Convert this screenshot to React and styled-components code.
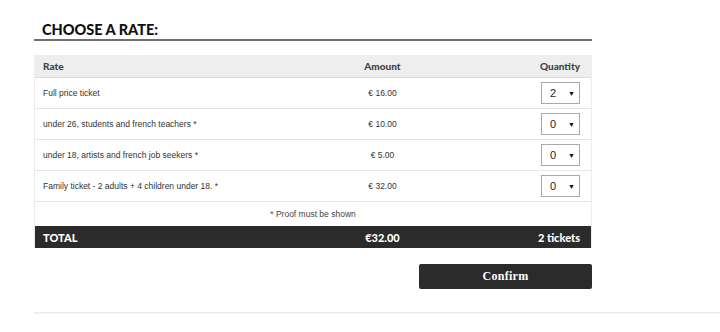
import React from 'react'
import styled, { createGlobalStyle } from 'styled-components'

const Global = createGlobalStyle`
  html, body { margin: 0; padding: 0; background: #fff; }
  body { font-family: "Liberation Sans", Arial, sans-serif; }
`

const rates = [
  { name: 'Full price ticket', amount: '€ 16.00', qty: 2 },
  { name: 'under 26, students and french teachers *', amount: '€ 10.00', qty: 0 },
  { name: 'under 18, artists and french job seekers *', amount: '€ 5.00', qty: 0 },
  { name: 'Family ticket - 2 adults + 4 children under 18. *', amount: '€ 32.00', qty: 0 },
]

const App = () => {
  return (
    <Page>
      <Global />
      <Section>
        <Title>CHOOSE A RATE:</Title>
        <Table>
          <HeadRow>
            <Cell>Rate</Cell>
            <Cell align="center">Amount</Cell>
            <Cell align="right">Quantity</Cell>
          </HeadRow>
          {rates.map((r) => (
            <Row key={r.name}>
              <Cell>{r.name}</Cell>
              <Cell align="center">{r.amount}</Cell>
              <Cell align="right">
                <Select>
                  <span>{r.qty}</span>
                  <Arrow>▼</Arrow>
                </Select>
              </Cell>
            </Row>
          ))}
          <Note>* Proof must be shown</Note>
          <TotalRow>
            <Cell>TOTAL</Cell>
            <Cell align="center">€32.00</Cell>
            <Cell align="right">2 tickets</Cell>
          </TotalRow>
        </Table>
        <Actions>
          <Confirm>Confirm</Confirm>
        </Actions>
      </Section>
      <Footer />
    </Page>
  )
}

const Page = styled.div`
  width: 720px;
  height: 332px;
  padding-top: 22px;
  box-sizing: border-box;
  overflow: hidden;
`

const Section = styled.div`
  width: 558px;
  margin-left: 34px;
`

const Title = styled.h2`
  margin: 0;
  padding: 0 0 2px 8px;
  font-family: "Lato", sans-serif;
  font-weight: 900;
  font-size: 14.5px;
  line-height: 15px;
  color: #111;
  border-bottom: 2px solid #6f6f6f;
`

const Table = styled.div`
  margin-top: 14px;
  border-left: 1px solid #ececec;
  border-right: 1px solid #ececec;
`

const Cell = styled.div`
  display: flex;
  align-items: center;
  justify-content: ${(p) =>
    p.align === 'center' ? 'center' : p.align === 'right' ? 'flex-end' : 'flex-start'};
  &:first-child { padding-left: 8px; }
  &:last-child { padding-right: 11px; }
`

const Grid = styled.div`
  display: grid;
  grid-template-columns: 50% 25% 25%;
  box-sizing: border-box;
`

const HeadRow = styled(Grid)`
  height: 23px;
  background: #eeeeee;
  border-bottom: 1px solid #dcdcdc;
  font-family: "Lato", sans-serif;
  font-weight: 900;
  font-size: 10px;
  color: #444;
`

const Row = styled(Grid)`
  height: 31px;
  border-bottom: 1px solid #e6e6e6;
  font-size: 8.5px;
  color: #333;
`

const Select = styled.div`
  width: 39px;
  height: 22px;
  box-sizing: border-box;
  border: 1px solid #a9a9a9;
  background: #fff;
  display: flex;
  align-items: center;
  justify-content: space-between;
  padding: 0 4px 0 8px;
  font-size: 11px;
  color: #222;
`

const Arrow = styled.span`
  font-size: 7px;
  color: #111;
`

const Note = styled.div`
  height: 24px;
  display: flex;
  align-items: center;
  justify-content: center;
  font-size: 8.5px;
  color: #444;
`

const TotalRow = styled(Grid)`
  height: 22px;
  background: #2b2b2b;
  color: #fff;
  font-family: "Lato", sans-serif;
  font-weight: 900;
  font-size: 11px;
`

const Actions = styled.div`
  display: flex;
  justify-content: flex-end;
  margin-top: 16px;
`

const Confirm = styled.button`
  width: 173px;
  height: 25px;
  border: none;
  border-radius: 2px;
  background: #2b2b2b;
  color: #fff;
  font-family: "Liberation Serif", serif;
  font-weight: bold;
  font-size: 12px;
  letter-spacing: 0.3px;
  cursor: pointer;
`

const Footer = styled.div`
  margin: 23px 0 0 34px;
  border-top: 1px solid #ebebeb;
  box-shadow: 0 1px 1px #f3f3f3;
`

export default App
